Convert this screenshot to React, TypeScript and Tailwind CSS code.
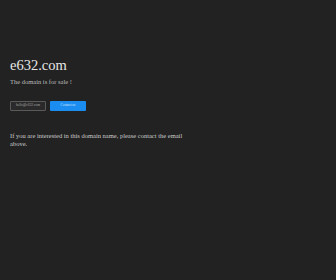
export default function App() {
  return (
    <div className="w-[336px] h-[280px] bg-[#222222] overflow-hidden" style={{ fontFamily: '"Liberation Serif", serif' }}>
      <div className="pt-[56px] pl-[10px] w-[190px]">
        <h1 className="text-[14.5px] leading-[18px] text-[#e6e6e6]">e632.com</h1>
        <p className="mt-[4px] text-[6.5px] leading-[8px] text-[#bdbdbd]">The domain is for sale !</p>
        <div className="mt-[15px] flex gap-[4px]">
          <div className="w-[36px] h-[10px] border border-[#5a5a5a] bg-[#2a2a2a] rounded-[1px] flex items-center justify-center text-[3.5px] text-[#aaaaaa]">hello@e632.com</div>
          <div className="w-[36px] h-[10px] bg-[#1b8cf0] rounded-[1px] flex items-center justify-center text-[3.5px] text-[#cfe6ff]">Contact us</div>
        </div>
        <p className="mt-[21px] text-[6.5px] leading-[8px] text-[#cccccc]">If you are interested in this domain name, please contact the email above.</p>
      </div>
    </div>
  );
}
